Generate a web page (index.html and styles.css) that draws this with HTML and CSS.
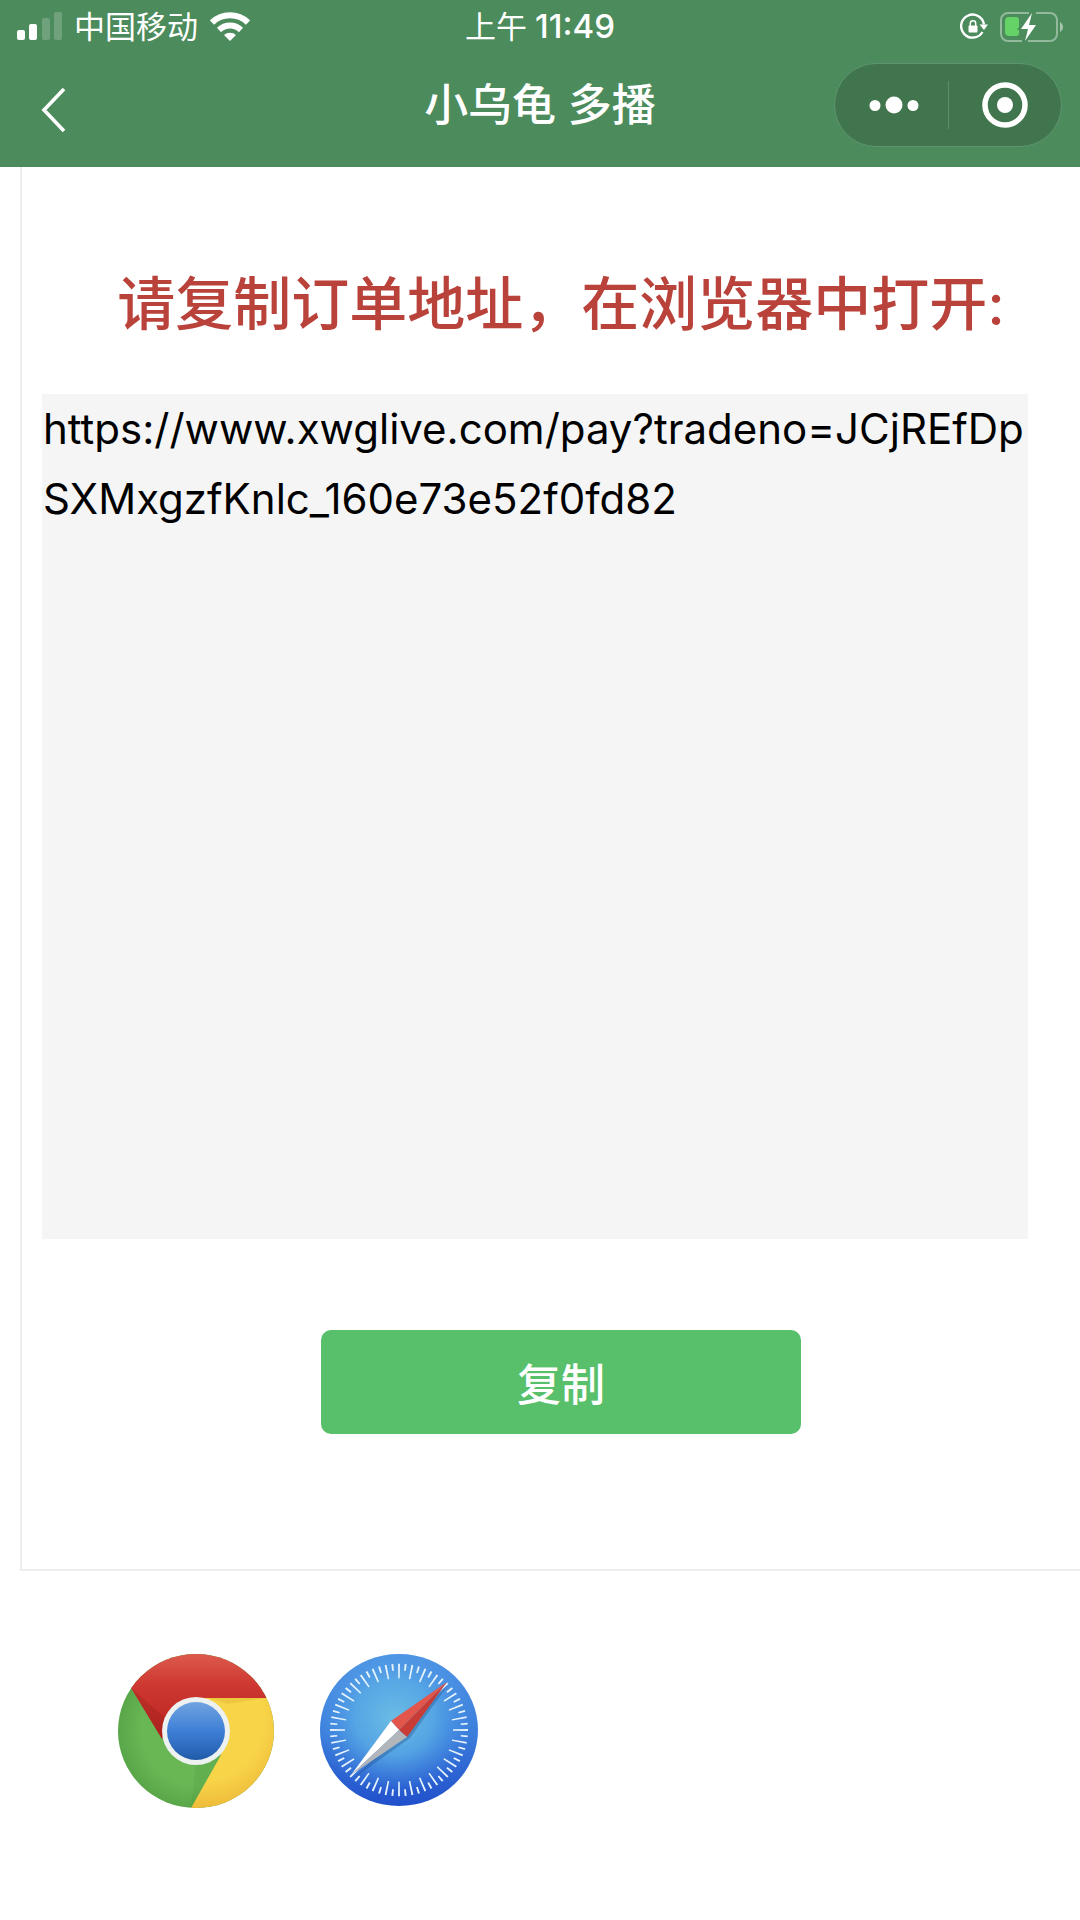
FILE: index.html
```html
<!DOCTYPE html>
<html lang="zh-CN">
<head>
<meta charset="utf-8">
<meta name="viewport" content="width=device-width, initial-scale=1">
<title>小乌龟 多播</title>
<link rel="stylesheet" href="styles.css">
</head>
<body>
<header class="header">
  <div class="status">
    <div class="status-left">
      <svg class="signal" width="46" height="30" viewBox="0 0 46 30" fill="#fff" aria-hidden="true">
        <rect x="1" y="18" width="8" height="10" rx="2"/>
        <rect x="13" y="12" width="8" height="16" rx="2"/>
        <rect x="26" y="6" width="8" height="22" rx="2" opacity=".2"/>
        <rect x="38" y="0" width="8" height="28" rx="2" opacity=".2"/>
      </svg>
      <span class="carrier">中国移动</span>
      <svg width="40" height="30" viewBox="0 0 40 30" aria-hidden="true">
        <g fill="none" stroke="#fff" stroke-width="6">
          <path d="M2 10.500A26 26 0 0 1 38 10.500"/>
          <path d="M9 18A16 16 0 0 1 31 18"/>
        </g>
        <path d="M14 23A9 9 0 0 1 26 23L20 29Z" fill="#fff"/>
      </svg>
    </div>
    <time class="clock" datetime="11:49"><span>上午</span><span class="digits">11:49</span></time>
    <div class="status-right">
      <svg width="28" height="28" viewBox="0 0 28 28" aria-hidden="true">
        <path d="M22.500 19A11.500 11.500 0 1 1 24 11.500" fill="none" stroke="#fff" stroke-width="2.400"/>
        <path d="M19.500 11.500H28L24 17Z" fill="#fff"/>
        <rect x="8.500" y="12.500" width="9" height="7" rx="1" fill="#fff"/>
        <path d="M10.300 13V10.500a2.700 2.700 0 0 1 5.400 0V13" fill="none" stroke="#fff" stroke-width="1.500"/>
      </svg>
      <svg width="64" height="30" viewBox="0 0 64 30" aria-hidden="true">
        <path d="M29 1H8A7 7 0 0 0 1 8V22A7 7 0 0 0 8 29H22M36 1H50A7 7 0 0 1 57 8V22A7 7 0 0 1 50 29H28" fill="none" stroke="#fff" stroke-opacity=".4" stroke-width="2"/>
        <path d="M60 10C64 12 64 18 60 20Z" fill="#fff" opacity=".5"/>
        <path d="M9 5H16Q19 5 19 8V15L17 18H19V21Q19 24 16 24H9A4 4 0 0 1 5 20V9A4 4 0 0 1 9 5Z" fill="#65d268"/>
        <path d="M32 1L21 17H28L25 29L36 13H29Z" fill="#fff"/>
      </svg>
    </div>
  </div>
  <nav class="nav">
    <button class="back" type="button" aria-label="返回">
      <svg width="26" height="56" viewBox="0 0 26 56" aria-hidden="true">
        <path d="M24 12L4 33L24 54" fill="none" stroke="#fff" stroke-width="3.600"/>
      </svg>
    </button>
    <h1 class="title">小乌龟 多播</h1>
    <div class="capsule">
      <button class="capsule-button" type="button" aria-label="更多">
        <svg width="56" height="48" viewBox="0 0 56 48" fill="#fff" aria-hidden="true">
          <circle cx="12" cy="24.500" r="5.500"/><circle cx="31" cy="24" r="8.500"/><circle cx="50" cy="24.500" r="5.500"/>
        </svg>
      </button>
      <span class="divider"></span>
      <button class="capsule-button" type="button" aria-label="关闭">
        <svg width="48" height="48" viewBox="0 0 48 48" aria-hidden="true">
          <circle cx="24" cy="24" r="20" fill="none" stroke="#fff" stroke-width="5.500"/><circle cx="24" cy="24" r="8" fill="#fff"/>
        </svg>
      </button>
    </div>
  </nav>
</header>
<main>
  <section class="card">
    <label class="prompt" for="order-url">请复制订单地址，在浏览器中打开:</label>
    <textarea class="url" id="order-url" readonly spellcheck="false">https://www.xwglive.com/pay?tradeno=JCjREfDpSXMxgzfKnlc_160e73e52f0fd82</textarea>
    <button class="copy" type="button">复制</button>
  </section>
  <div class="browsers">
    <svg width="156" height="154" viewBox="0 0 156 154" role="img" aria-label="Chrome">
      <defs>
        <linearGradient id="red" x1="0" y1="0" x2="0" y2="1"><stop offset="0" stop-color="#dc5a4b"/><stop offset=".35" stop-color="#cf3932"/><stop offset="1" stop-color="#b9211f"/></linearGradient>
        <radialGradient id="green" gradientUnits="userSpaceOnUse" cx="78" cy="77" r="78"><stop offset=".7" stop-color="#69b655"/><stop offset="1" stop-color="#58a648"/></radialGradient>
        <radialGradient id="yellow" gradientUnits="userSpaceOnUse" cx="85" cy="65" r="88"><stop offset=".7" stop-color="#f8d448"/><stop offset="1" stop-color="#efbd3b"/></radialGradient>
        <linearGradient id="blue" x1="0" y1="0" x2="0" y2="1"><stop offset="0" stop-color="#70a3e0"/><stop offset=".5" stop-color="#3e7fd6"/><stop offset="1" stop-color="#205ba9"/></linearGradient>
        <clipPath id="disc"><ellipse cx="78" cy="77" rx="78" ry="77"/></clipPath>
      </defs>
      <g clip-path="url(#disc)">
        <rect width="156" height="154" fill="url(#green)"/>
        <path d="M78 44H156V154H73L103 101Z" fill="url(#yellow)"/>
        <path d="M13 34L0 0H156V44H78L44 85Z" fill="url(#red)"/>
        <path d="M90 44H147L110 50Z" fill="#c59b20" opacity=".2"/>
        <path d="M103 101L73 154L78 110Z" fill="#328033" opacity=".12"/>
        <path d="M13 34L44 85L47 64Z" fill="#7c1714" opacity=".2"/>
      </g>
      <circle cx="78" cy="77" r="34" fill="#edf1f0"/>
      <circle cx="78" cy="77" r="29" fill="url(#blue)"/>
    </svg>
    <svg width="158" height="152" viewBox="0 0 158 152" role="img" aria-label="Safari">
      <defs>
        <linearGradient id="sky" x1="0" y1="0" x2="0" y2="1"><stop offset="0" stop-color="#4e93e4"/><stop offset=".5" stop-color="#3c7fdc"/><stop offset="1" stop-color="#2150cb"/></linearGradient>
        <radialGradient id="glow" cx=".47" cy=".42" r=".5"><stop offset="0" stop-color="#6cbde4"/><stop offset=".5" stop-color="#5baee6" stop-opacity=".8"/><stop offset="1" stop-color="#4b94e6" stop-opacity="0"/></radialGradient>
      </defs>
      <ellipse cx="79" cy="76" rx="79" ry="76" fill="url(#sky)"/>
      <ellipse cx="79" cy="76" rx="79" ry="76" fill="url(#glow)"/>
      <g transform="translate(79 76) scale(1 .96)" fill="none" stroke="#e6f3fc">
        <circle r="61.500" stroke-width="15" pathLength="352" stroke-dasharray="1.600 9.400" stroke-dashoffset="0.800"/>
        <circle r="65.500" stroke-width="7" pathLength="352" stroke-dasharray="1.600 9.400" stroke-dashoffset="6.300"/>
      </g>
      <path d="M128 31L90 84L34 124Z" fill="#143a76" opacity=".3"/>
      <path d="M127 28L71 67L79 76Z" fill="#e2564b"/>
      <path d="M127 28L87 83L79 76Z" fill="#c93c36"/>
      <path d="M31 121L71 67L79 76Z" fill="#fff"/>
      <path d="M31 121L87 83L79 76Z" fill="#b2b5b9"/>
    </svg>
  </div>
</main>
</body>
</html>
```
FILE: styles.css
```css
* { box-sizing: border-box; }
body {
  margin: 0;
  background: #fff;
  color: #000;
  font-family: Inter, "Noto Sans CJK SC", sans-serif;
}
button { border: 0; padding: 0; background: none; color: inherit; font-family: inherit; cursor: pointer; }
svg { display: block; flex: none; }

.header { background: #4b8b5c; color: #fff; }
.status {
  display: grid;
  grid-template-columns: 1fr auto 1fr;
  align-items: center;
  height: 53px;
  padding: 0 16px;
  font-size: 31px;
  line-height: 40px;
}
.status-left, .status-right { display: flex; align-items: center; gap: 12px; }
.status-right { justify-content: flex-end; }
.clock { display: flex; align-items: baseline; gap: 8px; font-size: 31px; }
.digits { font-size: 33px; font-weight: 500; }

.nav {
  display: grid;
  grid-template-columns: 1fr auto 1fr;
  align-items: center;
  padding: 10px 18px 20px;
}
.back { justify-self: start; margin-left: 22px; }
.title { margin: 0; font-size: 44px; font-weight: 500; line-height: 64px; }
.capsule {
  justify-self: end;
  display: flex;
  align-items: center;
  width: 228px;
  height: 84px;
  border: 1px solid #5e9570;
  border-radius: 42px;
  background: #40754d;
}
.capsule-button { flex: 1; display: flex; justify-content: center; }
.divider { width: 1px; height: 48px; background: #5e8f69; }

.card {
  display: flex;
  flex-direction: column;
  margin-left: 20px;
  padding: 93px 0 135px 20px;
  border-left: 2px solid #ededed;
  border-bottom: 2px solid #ededed;
}
.prompt {
  align-self: center;
  color: #b9423b;
  font-size: 58px;
  font-weight: 500;
  line-height: 88px;
  white-space: nowrap;
}
.url {
  display: block;
  height: 845px;
  margin: 46px 52px 0 0;
  padding: 0 1px;
  border: 0;
  border-radius: 0;
  outline: 0;
  resize: none;
  background: #f5f5f5;
  color: #000;
  font: 400 42px/70px Inter, "Noto Sans CJK SC", sans-serif;
  word-break: break-all;
}
.copy {
  align-self: center;
  width: 480px;
  height: 104px;
  margin-top: 91px;
  border-radius: 10px;
  background: #58bf6b;
  color: #fff;
  font-size: 44px;
  font-weight: 500;
}
.browsers { display: flex; align-items: flex-start; gap: 46px; padding: 83px 118px; }
```
